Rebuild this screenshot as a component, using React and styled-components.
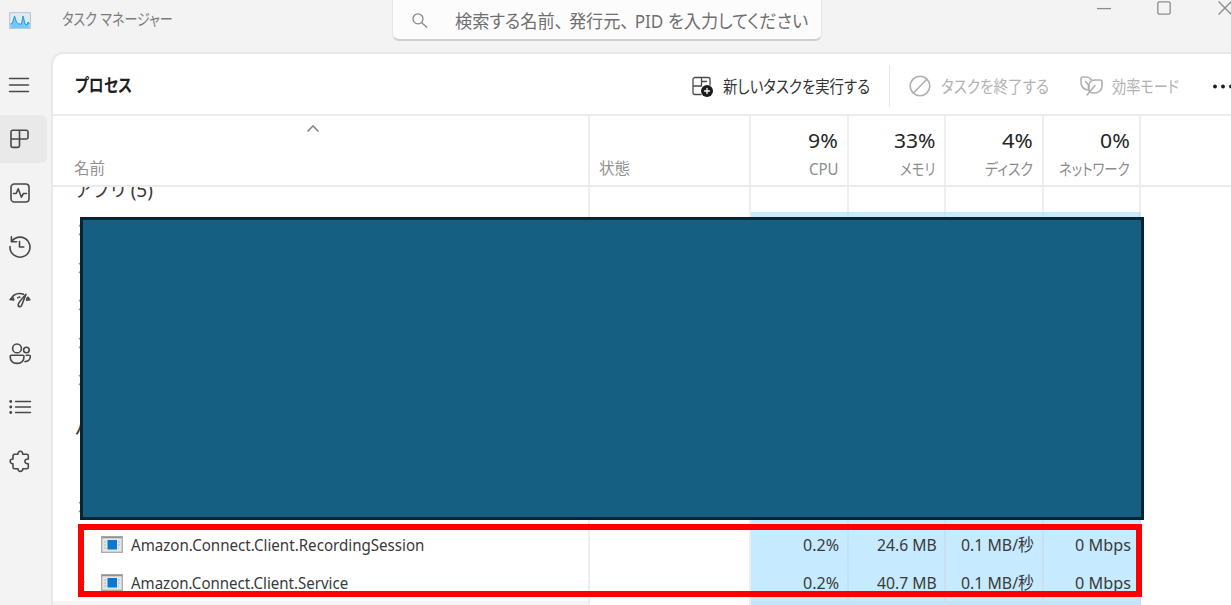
import React, { useLayoutEffect, useRef, useState } from 'react';
import styled, { createGlobalStyle } from 'styled-components';

const GlobalStyle = createGlobalStyle`
  * { box-sizing: border-box; }
  body {
    margin: 0;
    overflow: hidden;
    background: #f2f2f2;
    font-family: "Noto Sans", "Noto Sans CJK JP", sans-serif;
  }
`;

const Window = styled.div`
  position: relative;
  width: 1231px;
  height: 605px;
  overflow: hidden;
  display: flex;
  flex-direction: column;
  background: #f3f3f3;
`;

/* ---------- text that keeps a condensed, fixed measure ---------- */
const Measure = styled.span`
  display: flex;
  flex: none;
  justify-content: ${(p) => (p.$end ? 'flex-end' : 'flex-start')};
  width: ${(p) => p.$width}px;
  height: ${(p) => p.$size * 1.4}px;
  line-height: ${(p) => p.$size * 1.4}px;
  font-size: ${(p) => p.$size}px;
  font-weight: ${(p) => p.$weight || 400};
  color: ${(p) => p.$color || '#3a3a3a'};
  font-feature-settings: "palt";
  white-space: nowrap;
`;

const Glyphs = styled.span`
  flex: none;
  display: block;
  transform-origin: ${(p) => (p.$end ? 'right' : 'left')} center;
`;

const Comma = styled.span`
  margin-right: 6px;
`;

function Text({ width, size = 16.5, weight, color, end, children }) {
  const ref = useRef(null);
  const [scale, setScale] = useState(1);
  useLayoutEffect(() => {
    setScale(width / ref.current.offsetWidth);
  }, [width]);
  return (
    <Measure $width={width} $size={size} $weight={weight} $color={color} $end={end}>
      <Glyphs ref={ref} $end={end} style={{ transform: `scaleX(${scale})` }}>
        {children}
      </Glyphs>
    </Measure>
  );
}

/* ---------- title bar ---------- */
const TitleBar = styled.header`
  flex: none;
  height: 52px;
  display: flex;
  align-items: flex-start;
`;
const AppIcon = styled.svg`
  flex: none;
  width: 22px;
  height: 17px;
  margin: 12px 31px 0 9px;
`;
const Title = styled.div`
  flex: none;
  width: 330px;
  padding-top: 8px;
`;
const SearchBox = styled.div`
  flex: none;
  width: 430px;
  height: 51px;
  margin-top: -10px;
  padding: 11px 0 0 15px;
  display: flex;
  align-items: center;
  gap: 23px;
  background: #fcfcfc;
  border: 1px solid #e6e6e6;
  border-bottom: 2px solid #cfcfcf;
  border-radius: 7px;
`;
const WindowButtons = styled.div`
  display: flex;
  margin-left: 275px;
  gap: 46px;
`;
const WindowIcon = styled.svg`
  flex: none;
  width: 14px;
  height: 16px;
  fill: none;
  stroke: #8c8c8c;
  stroke-width: 1.3;
`;

/* ---------- side navigation ---------- */
const Body = styled.div`
  flex: 1;
  min-height: 0;
  display: flex;
`;
const Nav = styled.nav`
  width: 51px;
  flex: none;
  display: flex;
  flex-direction: column;
  gap: 5.7px;
  padding-top: 9.3px;
`;
const NavItem = styled.div`
  flex: none;
  width: 47px;
  height: 48px;
  padding-left: 8px;
  display: flex;
  align-items: center;
  border-radius: 0 6px 6px 0;
  background: ${(p) => (p.$active ? '#e9e9e9' : 'transparent')};
`;
const Icon = styled.svg`
  flex: none;
  width: 24px;
  height: 24px;
  overflow: visible;
  fill: none;
  stroke: ${(p) => p.$color || '#484848'};
  stroke-width: 1.6;
  stroke-linecap: round;
  stroke-linejoin: round;
`;

/* ---------- main panel ---------- */
const Panel = styled.main`
  flex: 1;
  min-width: 0;
  display: flex;
  flex-direction: column;
  background: #fff;
  border: solid #e8e8e8;
  border-width: 2px 0 0 2px;
  border-top-left-radius: 12px;
  overflow: hidden;
`;
const Toolbar = styled.div`
  flex: none;
  height: 62px;
  display: flex;
  align-items: center;
  padding-left: 22px;
  border-bottom: 2px solid #ededed;
`;
const Heading = styled.div`
  flex: none;
  width: 615px;
  padding-top: 2px;
`;
const Action = styled.div`
  flex: none;
  display: flex;
  align-items: center;
  gap: ${(p) => p.$gap}px;
  margin-right: ${(p) => p.$after}px;
  padding-top: 5px;
`;
const Divider = styled.div`
  flex: none;
  width: 1px;
  height: 42px;
  margin: 3px 18px 0 0;
  background: #e8e8e8;
`;
const More = styled.svg`
  flex: none;
  width: 24px;
  height: 8px;
  margin-top: 3px;
  fill: #1b1b1b;
`;

const columns = '537px 161px 98px 97px 98px 97px';
const HeaderRow = styled.div`
  flex: none;
  display: grid;
  grid-template-columns: ${columns} 1fr;
  height: 71px;
  border-bottom: 2px solid #ebebeb;
`;
const HeaderCell = styled.div`
  display: flex;
  flex-direction: column;
  justify-content: flex-end;
  align-items: ${(p) => (p.$numeric ? 'flex-end' : 'flex-start')};
  gap: 3px;
  padding: 0 ${(p) => (p.$numeric ? 9 : 0)}px 5px ${(p) => p.$indent || 0}px;
  border-right: 2px solid #eeeeee;
  &:last-child { border: 0; }
`;
const SortMark = styled.svg`
  align-self: center;
  width: 14px;
  height: 9px;
  margin: 0 36px 22px 0;
  fill: none;
  stroke: #8b838b;
  stroke-width: 1.6;
`;
const Rows = styled.div`
  flex: 1;
  min-height: 0;
  overflow: hidden;
`;
const RowList = styled.div`
  margin-top: -29px;
`;
const Row = styled.div`
  display: grid;
  grid-template-columns: ${columns};
  height: ${(p) => p.$height}px;
`;
const Cell = styled.div`
  display: flex;
  align-items: center;
  justify-content: flex-end;
  padding-right: ${(p) => p.$pad || 8}px;
  background: ${(p) => (p.$hot ? (p.$hover ? '#bfe4f8' : '#c6eaff') : 'transparent')};
  border-right: 2px solid ${(p) => (p.$hot ? '#c8e1f0' : '#eeeeee')};
`;
const NameCell = styled.div`
  display: flex;
  align-items: center;
  padding: ${(p) => (p.$group ? `${p.$drop}px 0 0 22px` : '0 0 0 25px')};
  background: ${(p) => (p.$hover ? '#f5f5f5' : 'transparent')};
  border-right: 2px solid #eeeeee;
`;
const Expander = styled.svg`
  width: 8px;
  height: 12px;
  margin-right: 15px;
  fill: none;
  stroke: ${(p) => (p.$shown ? '#9a9a9a' : 'transparent')};
  stroke-width: 1.5;
`;
const ProcessIcon = styled.svg`
  flex: none;
  width: 22px;
  height: 17px;
  margin-right: 8px;
`;

/* ---------- annotations over the window ---------- */
const Cover = styled.div`
  position: absolute;
  left: 80px;
  top: 217px;
  width: 1064px;
  height: 303px;
  background: #156082;
  border: 3px solid #042433;
`;
const Highlight = styled.div`
  position: absolute;
  left: 78px;
  top: 524px;
  width: 1064px;
  height: 73px;
  border: 6px solid #ff0000;
`;

const navIcons = [
  <path d="M1.5 5.5h19M1.5 12h19M1.5 18.5h19" strokeWidth="1.5" />,
  <path d="M4.700 3.200h13.600a1.700 1.700 0 0 1 1.700 1.700v5.400a1.700 1.700 0 0 1-1.700 1.700H3M11.500 3.200v15.600a1.600 1.600 0 0 1-1.600 1.600H4.700A1.700 1.700 0 0 1 3 18.700V4.900a1.700 1.700 0 0 1 1.700-1.700" />,
  <>
    <rect x="3" y="3" width="18" height="18" rx="3.3" />
    <path d="M5.500 12.500h2.700l2-4.700 3.200 8.400 2.100-3.700h3" />
  </>,
  <path d="M3.400 2.800v5h5.200M3.800 7.400A10 10 0 1 1 2 12.500M11.500 7.500v5.500h4.300" />,
  <>
    <path d="M2.500 11.500C4.500 7.500 8 5.500 11.500 5.500c1.500 0 2.800.3 4 .8M20 9.300l1.700 2.400M2 11.500l3.800.4L4.500 8.800M21.900 11.800l-3.300.3.800-2.500M9.800 9.700l2-.6" />
    <path d="M18 6.300l-4.300 11c-.9 2.200-3.800 1.600-3.500-.8.200-1.700 3.200-5.200 7.800-10.200z" />
  </>,
  <>
    <circle cx="9" cy="6.400" r="4.400" />
    <circle cx="18.400" cy="8" r="2.800" />
    <path d="M3.500 13.200h11.200a1.300 1.300 0 0 1 1.300 1.400c0 4.200-2.600 6.800-6.900 6.800S2.200 18.800 2.200 14.600a1.300 1.300 0 0 1 1.300-1.400zM18.200 13.200h2.600c1.200 0 1.700.8 1.500 2-.5 2.900-2.400 4.400-5.300 4.400" />
  </>,
  <>
    <path d="M7.500 6.500h15M7.500 12h15M7.500 17.500h15" strokeWidth="1.400" />
    <path d="M2.700 6.500h.1M2.700 12h.1M2.700 17.500h.1" strokeWidth="2.800" />
  </>,
  <path d="M6 5.200h4c-.4-3.900 5-3.900 4.700 0h4.100a1.500 1.500 0 0 1 1.500 1.500v3.400c-4.600-.7-4.600 5.200 0 4.600v3.500a1.500 1.500 0 0 1-1.500 1.500h-4c.2 3.600-5 3.600-4.800 0H6.500A1.500 1.500 0 0 1 5 18.200v-3.500c-3.800.2-3.800-5 0-4.700V6.500z" />,
];

const metrics = [
  { label: 'CPU', labelWidth: 30, value: '9%', valueWidth: 30 },
  { label: 'メモリ', labelWidth: 35, value: '33%', valueWidth: 42 },
  { label: 'ディスク', labelWidth: 48, value: '4%', valueWidth: 31 },
  { label: 'ネットワーク', labelWidth: 71, value: '0%', valueWidth: 30 },
];

const usage = (memory) => [
  ['0.2%', 36],
  [memory, 60],
  ['0.1 MB/秒', 73],
  ['0 Mbps', 56],
];

const rows = [
  { group: 'アプリ (5)', width: 78, height: 53.5, drop: 12 },
  { expandable: true },
  { expandable: true },
  { expandable: true },
  { expandable: true },
  { expandable: true },
  { group: 'バ', width: 18, height: 52, drop: 6 },
  {},
  { expandable: true },
  { name: 'Amazon.Connect.Client.RecordingSession', width: 293, cells: usage('24.6 MB') },
  { name: 'Amazon.Connect.Client.Service', width: 217, cells: usage('40.7 MB'), expandable: true },
  { hover: true },
];

const emptyCells = [['', 0], ['', 0], ['', 0], ['', 0]];

function ProcessRow({ row }) {
  const cells = row.cells || emptyCells;
  return (
    <Row $height={row.height || 37.5}>
      <NameCell $group={row.group} $drop={row.drop} $hover={row.hover}>
        {row.group ? (
          <Text width={row.width} size={19}>{row.group}</Text>
        ) : (
          <>
            <Expander $shown={row.expandable} viewBox="0 0 8 12"><path d="M1 1l5 5-5 5" /></Expander>
            {row.name && (
              <>
                <ProcessIcon viewBox="0 0 22 17">
                  <rect x=".7" y=".7" width="20.600" height="15.600" fill="#e6e6e6" stroke="#a9a9a9" strokeWidth="1.300" />
                  <path d="M1 1.500h20" stroke="#929292" strokeWidth="1.500" />
                  <path d="M3 6h2M3 9h2M3 12h2M17 6h2M17 9h2M17 12h1" stroke="#b5b5b5" />
                  <rect x="6.500" y="4" width="9.500" height="9.500" fill="#0878d2" />
                </ProcessIcon>
                <Text width={row.width}>{row.name}</Text>
              </>
            )}
          </>
        )}
      </NameCell>
      <Cell />
      {cells.map(([value, width], i) => (
        <Cell key={i} $hot={!row.group} $hover={row.hover} $pad={i === 1 ? 7 : 8}>
          {value && <Text width={width} end>{value}</Text>}
        </Cell>
      ))}
    </Row>
  );
}

export default function App() {
  return (
    <Window>
      <GlobalStyle />
      <TitleBar>
        <AppIcon viewBox="0 0 22 17">
          <rect x=".6" y=".6" width="20.800" height="15.800" fill="#dfe9f2" stroke="#b9c6d1" />
          <path d="M1.500 12l2-1 2-7 2 6 2 2h3l1.500-8 2 8 2 1 1-3 1.500 2v4H1.500z" fill="#74c8fa" />
          <path d="M1.500 12l2-1 2-7 2 6 2 2h3l1.500-8 2 8 2 1 1-3 1.500 2" fill="none" stroke="#2795e2" />
        </AppIcon>
        <Title><Text width={111} size={16} color="#7b7b7b">タスク マネージャー</Text></Title>
        <SearchBox>
          <Icon viewBox="0 0 24 24" $color="#888">
            <circle cx="10" cy="9.800" r="5" strokeWidth="1.300" />
            <path d="M13.700 13.800l5 4.500" strokeWidth="1.300" />
          </Icon>
          <Text width={353} size={18.500} color="#707070">
            検索する名前<Comma>、</Comma>発行元<Comma>、</Comma>PID を入力してください
          </Text>
        </SearchBox>
        <WindowButtons>
          <WindowIcon viewBox="0 0 14 16"><path d="M0 8.600h14" /></WindowIcon>
          <WindowIcon viewBox="0 0 14 16"><rect x=".8" y="1.800" width="12.400" height="12.400" rx="1.800" /></WindowIcon>
          <WindowIcon viewBox="0 0 14 16"><path d="M1.500 1.500l13 13M14.500 1.500l-13 13" /></WindowIcon>
        </WindowButtons>
      </TitleBar>
      <Body>
        <Nav>
          {navIcons.map((icon, i) => (
            <NavItem key={i} $active={i === 1}>
              <Icon viewBox="0 0 24 24">{icon}</Icon>
            </NavItem>
          ))}
        </Nav>
        <Panel>
          <Toolbar>
            <Heading><Text width={57} size={18.500} weight={600} color="#1f1f1f">プロセス</Text></Heading>
            <Action $gap={9} $after={19}>
              <Icon viewBox="0 0 24 24" $color="#4a4a4a">
                <path d="M11 19.500H5a2 2 0 0 1-2-2V4.500a2 2 0 0 1 2-2h13a2 2 0 0 1 2 2V10M3 11h8.500M11.500 2.500v8.500M11.500 6.500h5" strokeWidth="1.300" />
                <circle cx="17" cy="16" r="6" fill="#1c1c1c" stroke="none" />
                <path d="M17 13.500v5M14.500 16h5" stroke="#fff" strokeWidth="1.300" />
              </Icon>
              <Text width={147} size={16.500} color="#333">新しいタスクを実行する</Text>
            </Action>
            <Divider />
            <Action $gap={9} $after={30}>
              <Icon viewBox="0 0 24 24" $color="#b0b0b0">
                <circle cx="12" cy="11" r="9.800" />
                <path d="M5.500 18L18.800 4.300" />
              </Icon>
              <Text width={108} size={16.500} color="#b2b2b2">タスクを終了する</Text>
            </Action>
            <Action $gap={9} $after={33}>
              <Icon viewBox="0 0 24 24" $color="#b0b0b0">
                <path d="M9.500 15C5 15 2 12 2 7.500V4C2 2.500 2.700 2 4 2h3c2.500 0 4 .8 5.300 2.500M6.500 6.500l3.500 4v4" />
                <path d="M8 20l8-9.500M10.500 17C8 11.500 10 5 16 5h5c1.500 0 2 .5 2 2v3.500c0 6.500-6 9-12.500 6.500z" />
              </Icon>
              <Text width={67} size={16.500} color="#b2b2b2">効率モード</Text>
            </Action>
            <More viewBox="0 0 24 8">
              <circle cx="3" cy="4.500" r="1.900" />
              <circle cx="11" cy="4.500" r="1.900" />
              <circle cx="19" cy="4.500" r="1.900" />
            </More>
          </Toolbar>
          <HeaderRow>
            <HeaderCell $indent={21}>
              <SortMark viewBox="0 0 14 9"><path d="M1.500 7.500L7 2l5.500 5.500" /></SortMark>
              <Text width={31} size={15.500} color="#929292">名前</Text>
            </HeaderCell>
            <HeaderCell $indent={9}><Text width={31} size={15.500} color="#929292">状態</Text></HeaderCell>
            {metrics.map((m) => (
              <HeaderCell key={m.label} $numeric>
                <Text width={m.valueWidth} size={20.500} color="#252525" end>{m.value}</Text>
                <Text width={m.labelWidth} size={16} color="#8c8c8c" end>{m.label}</Text>
              </HeaderCell>
            ))}
            <HeaderCell />
          </HeaderRow>
          <Rows>
            <RowList>
              {rows.map((row, i) => <ProcessRow key={i} row={row} />)}
            </RowList>
          </Rows>
        </Panel>
      </Body>
      <Cover />
      <Highlight />
    </Window>
  );
}
